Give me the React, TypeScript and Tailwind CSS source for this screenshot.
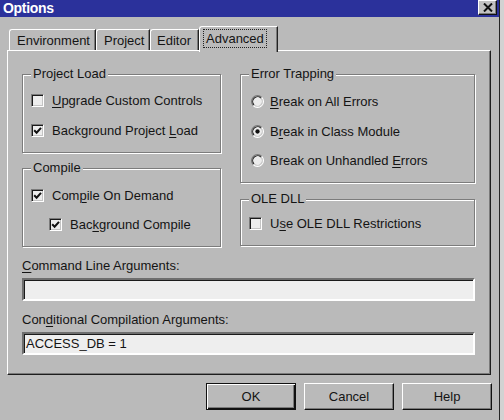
import type { ReactNode } from 'react';

const GREY = 'bg-[#bababa]';

function Check({ checked }: { checked: boolean }) {
  return (
    <div className="w-[13px] h-[13px] shrink-0 border border-t-[#7a7a7a] border-l-[#7a7a7a] border-r-white border-b-white bg-[#ededed] shadow-[inset_1px_1px_0_#1a1a1a,inset_-1px_-1px_0_#c4c4c4] flex items-center justify-center">
      {checked && (
        <svg width="9" height="9" viewBox="0 0 9 9">
          <path d="M1.2 4.2L3.6 6.7L8 1.8" stroke="#111" strokeWidth="2" fill="none" />
        </svg>
      )}
    </div>
  );
}

function Radio({ checked }: { checked: boolean }) {
  return (
    <svg width="13" height="13" viewBox="0 0 12 12" className="shrink-0">
      <circle cx="6" cy="6" r="5" fill="#ececec" />
      <path d="M2.11 9.89A5.5 5.5 0 0 1 9.89 2.11" stroke="#7a7a7a" strokeWidth="1" fill="none" />
      <path d="M9.89 2.11A5.5 5.5 0 0 1 2.11 9.89" stroke="#ffffff" strokeWidth="1" fill="none" />
      <path d="M2.82 9.18A4.5 4.5 0 0 1 9.18 2.82" stroke="#1a1a1a" strokeWidth="1" fill="none" />
      <path d="M9.18 2.82A4.5 4.5 0 0 1 2.82 9.18" stroke="#c4c4c4" strokeWidth="1" fill="none" />
      {checked && <circle cx="6" cy="6" r="2" fill="#111" />}
    </svg>
  );
}

function U({ children }: { children: ReactNode }) {
  return <span className="underline underline-offset-[2px] decoration-1">{children}</span>;
}

function GroupBox({ title, className, children }: { title: string; className: string; children: ReactNode }) {
  return (
    <div className={`relative border border-[#7c7c7c] shadow-[inset_1px_1px_0_#ffffff,1px_1px_0_#ffffff] flex flex-col ${className}`}>
      <span className={`absolute -top-[9px] left-[8px] px-[2px] leading-[16px] ${GREY}`}>{title}</span>
      {children}
    </div>
  );
}

function Row({ children, className = '' }: { children: ReactNode; className?: string }) {
  return <div className={`flex items-center h-[13px] leading-[16px] ${className}`}>{children}</div>;
}

function TextBox({ value }: { value?: string }) {
  return (
    <div className="w-[453px] h-[23px] border-2 border-t-[#6e6e6e] border-l-[#6e6e6e] border-r-white border-b-white bg-[#eeeeee] shadow-[inset_1px_1px_0_#1a1a1a] flex items-center pl-[2px] text-[13px] leading-[16px]">
      {value}
    </div>
  );
}

function Button({ label, isDefault = false }: { label: string; isDefault?: boolean }) {
  return (
    <div
      className={
        isDefault
          ? 'w-[90px] h-[27px] border border-[#111] shadow-[inset_1px_1px_0_#ffffff,inset_-1px_-1px_0_#111,inset_-2px_-2px_0_#7a7a7a] flex items-center justify-center'
          : 'w-[90px] h-[27px] border border-t-white border-l-white border-r-[#111] border-b-[#111] shadow-[inset_-1px_-1px_0_#7a7a7a] flex items-center justify-center'
      }
    >
      {label}
    </div>
  );
}

export default function App() {
  return (
    <div className="w-[504px] h-[420px] flex overflow-hidden bg-[#d2d2d2] font-['Liberation_Sans',Arial,sans-serif] text-[13px] text-[#141414]">
      <div className={`w-[500px] h-full ${GREY} border-r border-[#262626] flex flex-col`}>
        {/* Title bar */}
        <div className="h-[17px] shrink-0 bg-[#2b319b] flex items-start justify-between pl-[3px] pr-[2px]">
          <span className="text-white font-bold text-[14px] leading-[17px] tracking-[-0.3px]">Options</span>
          <div className="w-[19px] h-[15px] bg-[#c2c2c2] border border-t-white border-l-white border-r-[#111] border-b-[#111] shadow-[inset_-1px_-1px_0_#7a7a7a] flex items-center justify-center">
            <svg width="10" height="9" viewBox="0 0 10 9">
              <path d="M1 0.5L9 8.5M9 0.5L1 8.5" stroke="#111" strokeWidth="2" />
            </svg>
          </div>
        </div>

        <div className="pl-[7px] pt-[9px]">
          {/* Tabs */}
          <div className="flex items-end h-[24px] pl-[2px]">
            <div className="w-[87px] h-[21px] border-t border-l border-white border-r border-r-[#222] rounded-tl-[3px] shadow-[inset_-1px_0_0_#7a7a7a] flex items-center pl-[7px] pt-[1px] leading-[16px]">
              Environment
            </div>
            <div className="w-[54px] h-[21px] border-t border-l border-white border-r border-r-[#222] rounded-tl-[3px] shadow-[inset_-1px_0_0_#7a7a7a] flex items-center pl-[7px] pt-[1px] leading-[16px]">
              Project
            </div>
            <div className="w-[49px] h-[21px] border-t border-l border-white border-r border-r-[#222] rounded-tl-[3px] shadow-[inset_-1px_0_0_#7a7a7a] flex items-center pl-[6px] pt-[1px] leading-[16px]">
              Editor
            </div>
            <div className={`relative z-10 -mb-[2px] w-[79px] h-[26px] ${GREY} border-t border-l border-white border-r border-r-[#222] rounded-tl-[3px] shadow-[inset_-1px_0_0_#7a7a7a] flex items-start pt-[2px] pl-[3px]`}>
              <span className="border border-dotted border-[#222] px-[2px] leading-[17px]">Advanced</span>
            </div>
          </div>

          {/* Panel */}
          <div className="w-[484px] h-[325px] border-t border-l border-white border-r border-b border-r-[#1e1e1e] border-b-[#1e1e1e] shadow-[inset_-1px_-1px_0_#7a7a7a] pl-[14px] pt-[23px] flex flex-col">
            <div className="flex gap-[19px]">
              <div className="w-[199px] flex flex-col gap-[15px]">
                <GroupBox title="Project Load" className="h-[79px] pl-[8px] pt-[19px] gap-[17px]">
                  <Row>
                    <Check checked={false} />
                    <span className="ml-[8px]"><U>U</U>pgrade Custom Controls</span>
                  </Row>
                  <Row>
                    <Check checked />
                    <span className="ml-[8px]">Background Project <U>L</U>oad</span>
                  </Row>
                </GroupBox>
                <GroupBox title="Compile" className="h-[79px] pl-[8px] pt-[20px] gap-[16px]">
                  <Row>
                    <Check checked />
                    <span className="ml-[8px]">Com<U>p</U>ile On Demand</span>
                  </Row>
                  <Row className="pl-[18px]">
                    <Check checked />
                    <span className="ml-[8px]">Bac<U>k</U>ground Compile</span>
                  </Row>
                </GroupBox>
              </div>
              <div className="w-[235px] flex flex-col gap-[16px]">
                <GroupBox title="Error Trapping" className="h-[109px] pl-[10px] pt-[20px]">
                  <Row>
                    <Radio checked={false} />
                    <span className="ml-[6px]"><U>B</U>reak on All Errors</span>
                  </Row>
                  <Row className="mt-[17px]">
                    <Radio checked />
                    <span className="ml-[6px]">B<U>r</U>eak in Class Module</span>
                  </Row>
                  <Row className="mt-[16px]">
                    <Radio checked={false} />
                    <span className="ml-[6px]">Break on Unhandled <U>E</U>rrors</span>
                  </Row>
                </GroupBox>
                <GroupBox title="OLE DLL" className="h-[47px] pl-[8px] pt-[17px]">
                  <Row>
                    <Check checked={false} />
                    <span className="ml-[8px]">U<U>s</U>e OLE DLL Restrictions</span>
                  </Row>
                </GroupBox>
              </div>
            </div>

            <div className="mt-[11px] leading-[16px]"><U>C</U>ommand Line Arguments:</div>
            <div className="mt-[4px]"><TextBox /></div>
            <div className="mt-[11px] leading-[16px]">Con<U>d</U>itional Compilation Arguments:</div>
            <div className="mt-[4px]"><TextBox value="ACCESS_DB = 1" /></div>
          </div>
        </div>

        {/* Buttons */}
        <div className="mt-[8px] flex justify-end gap-[8px] pr-[7px]">
          <Button label="OK" isDefault />
          <Button label="Cancel" />
          <Button label="Help" />
        </div>
      </div>
      <div className="flex-1" />
    </div>
  );
}
